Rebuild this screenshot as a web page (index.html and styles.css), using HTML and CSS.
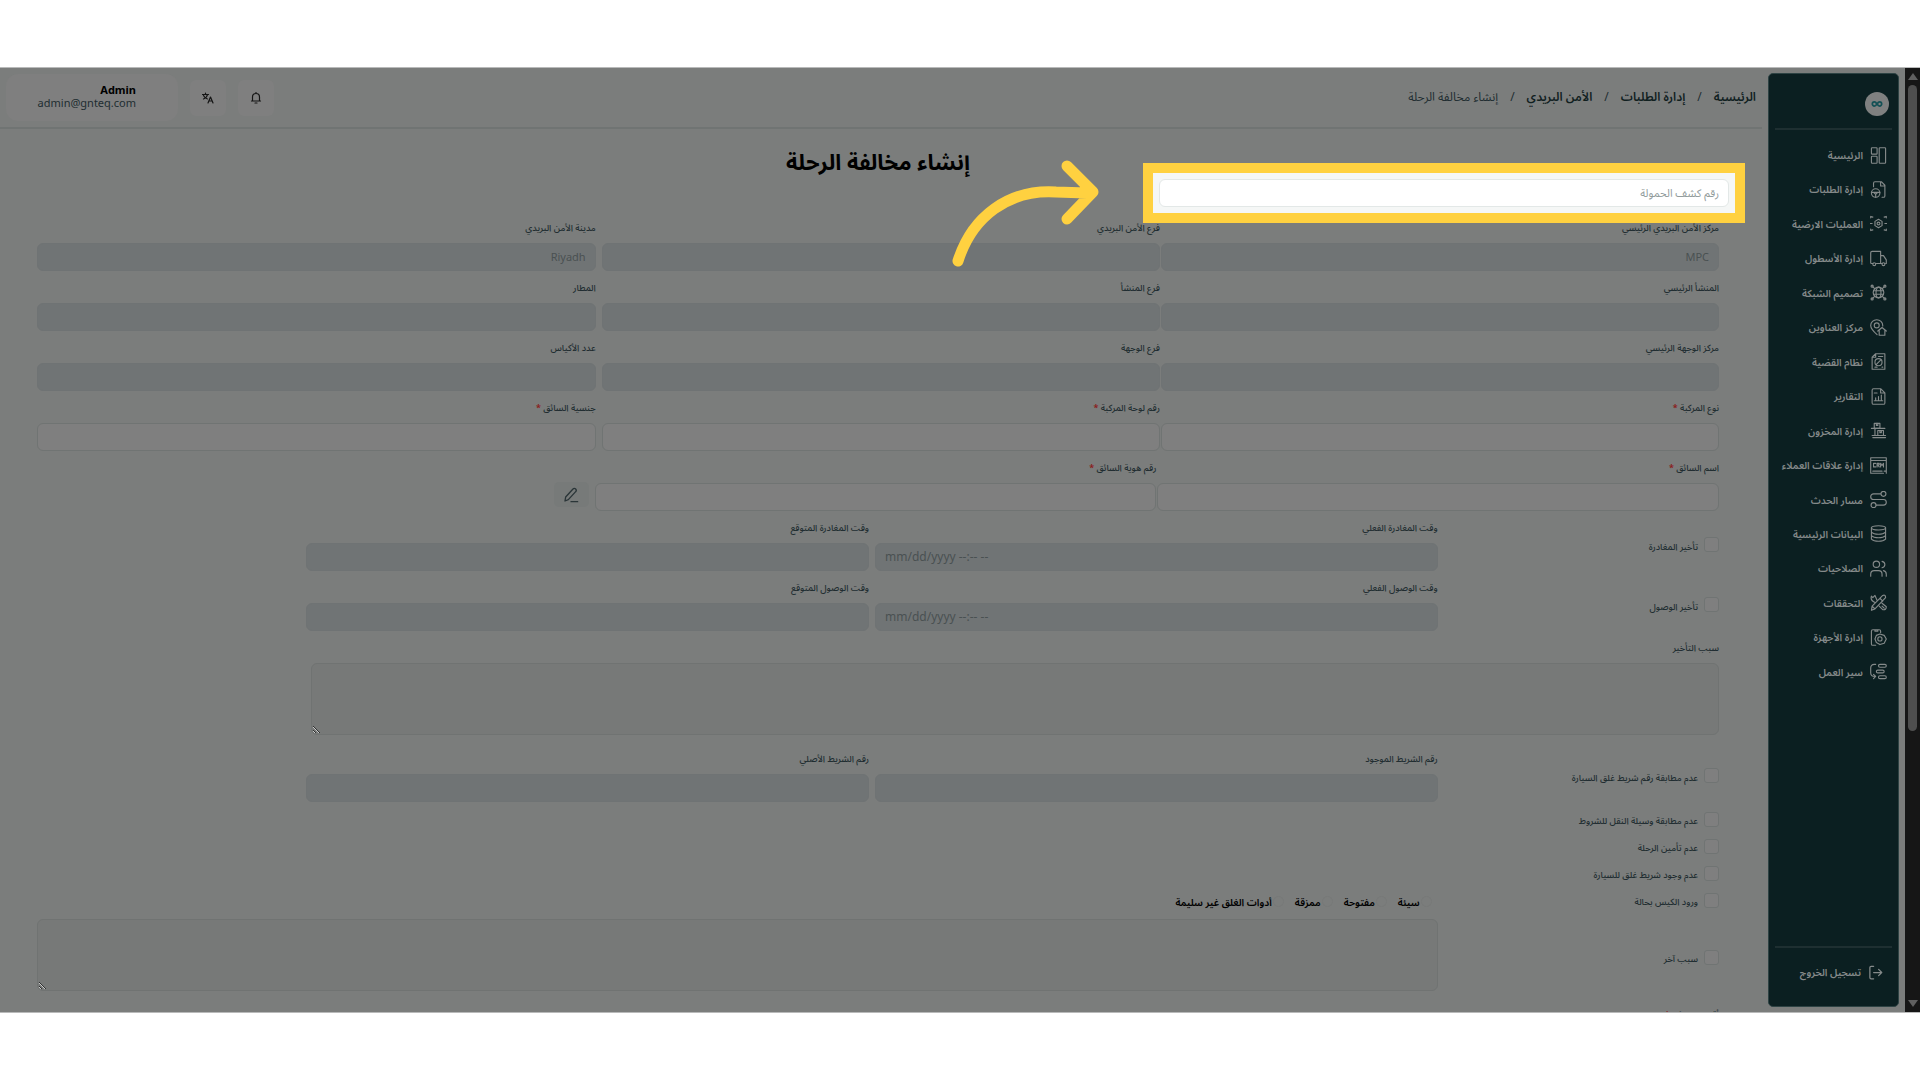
FILE: index.html
```html
<!DOCTYPE html>
<html lang="ar" dir="rtl">
  <head>
    <meta charset="UTF-8" />
    <meta name="viewport" content="width=device-width, initial-scale=1.0" />
    <title>إنشاء مخالفة الرحلة</title>
    <link rel="stylesheet" href="styles.css">
  </head>
  <body>
    <div class="frame">
      <div class="scrollbar">
        <span class="arrow_up"></span>
        <div class="track"><div class="thumb"></div></div>
        <span class="arrow_down"></span>
      </div>

      <aside class="sidebar">
        <div class="logo">
          <svg viewBox="0 0 24 24"><path d="M12 12c-2-3-3.200-3.500-4.500-3.500a3.500 3.500 0 0 0 0 7c1.300 0 2.500-.5 4.500-3.500s3.200-3.500 4.500-3.500a3.500 3.500 0 0 1 0 7c-1.300 0-2.500-.5-4.500-3.500z"/></svg>
        </div>
        <nav class="menu">
          <a href="#"><svg viewBox="0 0 24 24"><rect x="2" y="1" width="8" height="9" rx="1"/><rect x="2" y="13" width="8" height="10" rx="1"/><rect x="13" y="1" width="9" height="22" rx="1"/></svg>الرئيسية</a>
          <a href="#"><svg viewBox="0 0 24 24"><path d="M5 8V3q0-2 2-2h9l5 5v15q0 2-2 2h-2M15 1v6h6"/><circle cx="8" cy="17" r="6"/><path d="M2 16h12M8 18v5M5 16l3 3 3-3"/></svg>إدارة الطلبات</a>
          <a href="#"><svg viewBox="0 0 24 24"><path d="M1 4V2l3 1M23 4V2l-3 1M1 20v2l3-1M23 20v2l-3-1M0 12h3M21 12h3"/><path d="M12 6l5 3v6l-5 3-5-3V9z"/><circle cx="12" cy="12" r="2"/></svg>العمليات الارضية</a>
          <a href="#"><svg viewBox="0 0 24 24"><path d="M4 19H2q-1 0-1-1V4q0-2 2-2h12v17H9M15 8h4l4 6v5h-1M15 19h2"/><circle cx="6" cy="20" r="2"/><circle cx="19" cy="20" r="2"/></svg>إدارة الأسطول</a>
          <a href="#"><svg viewBox="0 0 24 24"><circle cx="12" cy="12" r="7.500"/><ellipse cx="12" cy="12" rx="3.500" ry="7.500"/><path d="M5 9.500h14M5 14.500h14M4 4l3 3M20 4l-3 3M4 20l3-3M20 20l-3-3"/><circle cx="3" cy="3" r="1.500"/><circle cx="21" cy="3" r="1.500"/><circle cx="3" cy="21" r="1.500"/><circle cx="21" cy="21" r="1.500"/></svg>تصميم الشبكة</a>
          <a href="#"><svg viewBox="0 0 24 24"><path d="M10 22Q1 14 1 9a8.500 8 0 0 1 17 0v1"/><circle cx="9.500" cy="9" r="3.500"/><path d="M11 17l6-5 6 5M13 16v7h8v-7"/></svg>مركز العناوين</a>
          <a href="#"><svg viewBox="0 0 24 24"><path d="M8 1h13v22H3V6zM8 1v5H3M12 5h6M7 20h3M17 20h1"/><circle cx="12" cy="13" r="5"/><path d="M9 16l6-6"/></svg>نظام القضية</a>
          <a href="#"><svg viewBox="0 0 24 24"><path d="M15 1H5Q3 1 3 3v18q0 2 2 2h14q2 0 2-2V7zM15 1v6h6M6 7h4M6 18h12M8 18v-4M12 18v-6M16 18v-8"/></svg>التقارير</a>
          <a href="#"><svg viewBox="0 0 24 24"><rect x="6" y="2" width="8" height="7"/><rect x="11" y="12" width="8" height="7"/><path d="M9 2v3h2V2M14 12v3h2v-3M2 9h19M4 22h18M3 19h19M7 9v10"/></svg>إدارة المخزون</a>
          <a href="#"><svg viewBox="0 0 24 24"><path d="M23 17V1H1v22h18M1 5h22M4 20h13M20 20h3M23 17v6"/><path d="M8 9H5v5h3M10 14V9h3v2h-3M13 14l-2-3M15 14V9l2 3 2-3v5"/></svg>إدارة علاقات العملاء</a>
          <a href="#"><svg viewBox="0 0 24 24"><circle cx="19" cy="4" r="3.500"/><circle cx="5" cy="20" r="3.500"/><path d="M15 4H5a4 4 0 0 0 0 8h14a4 4 0 0 1 0 8H9"/></svg>مسار الحدث</a>
          <a href="#"><svg viewBox="0 0 24 24"><ellipse cx="12" cy="4" rx="10" ry="3"/><path d="M2 4v16q3 3 10 3t10-3V4M2 10q3 3 10 3t10-3M2 15q3 3 10 3t10-3"/></svg>البيانات الرئيسية</a>
          <a href="#"><svg viewBox="0 0 24 24"><circle cx="9" cy="6" r="4.500"/><path d="M1 23v-3q0-5 5-5h6q5 0 5 5v3M17 2q4 1 4 4.500T17 11M19 15q4 1 4 5v3"/></svg>الصلاحيات</a>
          <a href="#"><svg viewBox="0 0 24 24"><path d="M2 23l1-6L18 2q2-1 3 0t1 3L7 21zM14 6l4 4M10 9L7 2 4 5 2 3q-2 6 5 9M13 17l5 5q5 1 5-4l-6-5M17 17l3 3M3 17l4 4"/></svg>التحققات</a>
          <a href="#"><svg viewBox="0 0 24 24"><path d="M8 23H4q-2 0-2-2V3q0-2 2-2h9q2 0 2 2v2M7 1v2h4V1"/><path d="M14 7l6 2 3 5-3 6-6 2-5-3-2-5 2-5z"/><circle cx="14" cy="14" r="3"/></svg>إدارة الأجهزة</a>
          <a href="#"><svg viewBox="0 0 24 24"><rect x="12" y="2" width="11" height="4" rx="2"/><rect x="9" y="10" width="11" height="4" rx="2"/><rect x="12" y="18" width="11" height="4" rx="2"/><path d="M8 2H6Q1 2 1 7v7q0 5 6 5M5 16l3 3-3 3"/></svg>سير العمل</a>
        </nav>
        <a class="logout" href="#"><svg viewBox="0 0 24 24"><path d="M9 2H5Q3 2 3 4v16q0 2 2 2h4M9 12h13M17 7l5 5-5 5"/></svg>تسجيل الخروج</a>
      </aside>

      <main class="content">
        <header>
          <nav class="breadcrumb">
            <a href="#">الرئيسية</a><span>/</span>
            <a href="#">إدارة الطلبات</a><span>/</span>
            <a href="#">الأمن البريدي</a><span>/</span>
            <span>إنشاء مخالفة الرحلة</span>
          </nav>
          <div class="tools">
            <button class="tool" aria-label="الإشعارات"><svg viewBox="0 0 24 24"><path d="M5 18V10a7 7 0 0 1 14 0v8M3 18h18M12 1v2M10 22h4"/></svg></button>
            <button class="tool" aria-label="اللغة"><svg viewBox="0 0 24 24"><path d="M1 5h12M7 2v3M3 14q7-3 8-9M3 7q3 6 8 7M12 22l5-12 5 12M14 18h6"/></svg></button>
            <div class="user">
              <strong>Admin</strong>
              <span>admin@gnteq.com</span>
            </div>
          </div>
        </header>

        <form class="trip">
          <h1>إنشاء مخالفة الرحلة</h1>
          <div class="spotlight">
            <input type="text" placeholder="رقم كشف الحمولة" aria-label="رقم كشف الحمولة" />
            <svg class="pointer" viewBox="0 0 148 110"><path d="M6 102C20 58 56 30 104 33L135 34M115 7L141 33L115 60"/></svg>
          </div>

          <div class="row">
            <div class="pair">
              <div class="field"><label for="hub">مركز الأمن البريدي الرئيسي</label><input id="hub" type="text" value="MPC" disabled /></div>
              <div class="field"><label for="branch">فرع الأمن البريدي</label><input id="branch" type="text" disabled /></div>
            </div>
            <div class="field"><label for="city">مدينة الأمن البريدي</label><input id="city" type="text" value="Riyadh" disabled /></div>
          </div>
          <div class="row">
            <div class="pair">
              <div class="field"><label for="origin">المنشأ الرئيسي</label><input id="origin" type="text" disabled /></div>
              <div class="field"><label for="origin_branch">فرع المنشأ</label><input id="origin_branch" type="text" disabled /></div>
            </div>
            <div class="field"><label for="airport">المطار</label><input id="airport" type="text" disabled /></div>
          </div>
          <div class="row">
            <div class="pair">
              <div class="field"><label for="dest">مركز الوجهة الرئيسي</label><input id="dest" type="text" disabled /></div>
              <div class="field"><label for="dest_branch">فرع الوجهة</label><input id="dest_branch" type="text" disabled /></div>
            </div>
            <div class="field"><label for="bags">عدد الأكياس</label><input id="bags" type="text" disabled /></div>
          </div>
          <div class="row">
            <div class="pair">
              <div class="field"><label for="vehicle">نوع المركبة <b>*</b></label><input id="vehicle" type="text" /></div>
              <div class="field"><label for="plate">رقم لوحة المركبة <b>*</b></label><input id="plate" type="text" /></div>
            </div>
            <div class="field"><label for="nation">جنسية السائق <b>*</b></label><input id="nation" type="text" /></div>
          </div>
          <div class="row driver">
            <div class="pair">
              <div class="field"><label for="driver">اسم السائق <b>*</b></label><input id="driver" type="text" /></div>
              <div class="field"><label for="driver_id">رقم هوية السائق <b>*</b></label><input id="driver_id" type="text" /></div>
            </div>
            <button class="edit" type="button" aria-label="تعديل"><svg viewBox="0 0 24 24"><path d="M3 21l1-6L15 3q2-2 4 0t0 4L8 19zM12 22h10"/></svg></button>
          </div>

          <div class="row times">
            <div class="check"><input id="late_dep" type="checkbox" /><label for="late_dep">تأخير المغادرة</label></div>
            <div class="field"><label for="dep_real">وقت المغادرة الفعلي</label><input id="dep_real" type="text" dir="ltr" placeholder="mm/dd/yyyy --:-- --" disabled /></div>
            <div class="field"><label for="dep_plan">وقت المغادرة المتوقع</label><input id="dep_plan" type="text" disabled /></div>
          </div>
          <div class="row times">
            <div class="check"><input id="late_arr" type="checkbox" /><label for="late_arr">تأخير الوصول</label></div>
            <div class="field"><label for="arr_real">وقت الوصول الفعلي</label><input id="arr_real" type="text" dir="ltr" placeholder="mm/dd/yyyy --:-- --" disabled /></div>
            <div class="field"><label for="arr_plan">وقت الوصول المتوقع</label><input id="arr_plan" type="text" disabled /></div>
          </div>
          <div class="field reason"><label for="reason">سبب التأخير</label><textarea id="reason" disabled></textarea></div>

          <div class="row times spaced">
            <div class="check"><input id="tape" type="checkbox" /><label for="tape">عدم مطابقة رقم شريط غلق السيارة</label></div>
            <div class="field"><label for="tape_found">رقم الشريط الموجود</label><input id="tape_found" type="text" disabled /></div>
            <div class="field"><label for="tape_orig">رقم الشريط الأصلي</label><input id="tape_orig" type="text" disabled /></div>
          </div>
          <div class="row line"><div class="check"><input id="transport" type="checkbox" /><label for="transport">عدم مطابقة وسيلة النقل للشروط</label></div></div>
          <div class="row line"><div class="check"><input id="unsafe" type="checkbox" /><label for="unsafe">عدم تأمين الرحلة</label></div></div>
          <div class="row line"><div class="check"><input id="no_tape" type="checkbox" /><label for="no_tape">عدم وجود شريط غلق للسيارة</label></div></div>
          <div class="row line">
            <div class="check"><input id="bag_state" type="checkbox" /><label for="bag_state">ورود الكيس بحالة</label></div>
            <div class="options">
              <label><input type="radio" name="bag" disabled />سيئة</label>
              <label><input type="radio" name="bag" disabled />مفتوحة</label>
              <label><input type="radio" name="bag" disabled />ممزقة</label>
              <label><input type="radio" name="bag" disabled />أدوات الغلق غير سليمة</label>
            </div>
          </div>
          <div class="row other">
            <div class="check"><input id="other" type="checkbox" /><label for="other">سبب آخر</label></div>
            <textarea aria-label="سبب آخر" disabled></textarea>
          </div>
          <div class="field spaced"><label for="statement">أقوال السائق <b>*</b></label><textarea id="statement"></textarea></div>
        </form>
      </main>
    </div>
  </body>
</html>
```
FILE: styles.css
```css
* {
  box-sizing: border-box;
}

body {
  margin: 0;
  height: 100vh;
  padding: 67px 0;
  background-color: #fff;
  font-family: "Noto Sans", "Noto Sans Arabic", "DejaVu Sans", sans-serif;
  font-size: 11px;
  color: #212d31;
}

a {
  color: inherit;
  text-decoration: none;
}

button,
input,
textarea {
  font-family: inherit;
  font-size: inherit;
}

svg {
  fill: none;
  stroke: currentColor;
  stroke-width: 2;
  stroke-linecap: round;
  stroke-linejoin: round;
}

.frame {
  display: flex;
  height: 100%;
  overflow: hidden;
  background-color: #7b7d7c;
  border-top: 1px solid #b9baba;
  border-bottom: 1px solid #b9baba;
}

/* scrollbar */
.scrollbar {
  width: 15px;
  padding: 5px 0;
  display: flex;
  flex-direction: column;
  align-items: center;
  background-color: #161616;
}

.arrow_up,
.arrow_down {
  border: 5px solid transparent;
}

.arrow_up {
  border-top: 0;
  border-bottom: 7px solid #606060;
}

.arrow_down {
  border-bottom: 0;
  border-top: 7px solid #606060;
}

.track {
  flex: 1;
  width: 9px;
  padding: 5px 0;
}

.thumb {
  height: 71%;
  border-radius: 5px;
  background-color: #4e4e4e;
}

/* sidebar */
.sidebar {
  flex: none;
  width: 131px;
  margin: 5px 6px;
  padding: 0 6px;
  display: flex;
  flex-direction: column;
  border: 1px solid #2e4344;
  border-radius: 5px;
  background-color: #0b1f21;
  color: #858a8a;
  font-size: 10px;
  font-weight: 600;
}

.logo {
  height: 56px;
  padding: 18px 3px 0;
  border-bottom: 2px solid #1e2f31;
}

.logo svg {
  display: block;
  width: 24px;
  height: 24px;
  padding: 5px;
  border-radius: 50%;
  background-color: #7f8080;
  color: #145055;
  stroke-width: 3;
}

.menu {
  height: 541px;
  margin-top: 13px;
  display: flex;
  flex-direction: column;
  justify-content: space-between;
}

.menu a,
.logout {
  display: flex;
  align-items: center;
  gap: 7px;
  padding-right: 5px;
  line-height: 24px;
  white-space: nowrap;
}

.menu svg,
.logout svg {
  flex: none;
  width: 17px;
  height: 17px;
  stroke-width: 1.6;
}

.logout {
  margin-top: auto;
  padding: 12px 9px 22px;
  border-top: 2px solid #1e2f31;
}

.logout svg {
  width: 15px;
  height: 15px;
  stroke-width: 2;
}

/* top bar */
.content {
  flex: 1;
  min-width: 0;
  overflow: hidden;
}

header {
  height: 61px;
  padding: 0 6px;
  display: flex;
  align-items: center;
  justify-content: space-between;
  border-bottom: 2px solid #707473;
}

.breadcrumb {
  display: flex;
  align-items: baseline;
  gap: 12px;
  font-size: 12px;
}

.breadcrumb a {
  font-weight: 600;
  color: #10201f;
}

.tools {
  display: flex;
  align-items: center;
  gap: 12px;
}

.tool {
  width: 36px;
  height: 36px;
  padding: 0;
  border: 0;
  border-radius: 6px;
  background-color: #7f7f7f;
  color: #151515;
}

.tool svg {
  display: block;
  width: 12px;
  height: 12px;
  margin: auto;
  stroke-width: 2.4;
}

.user {
  width: 172px;
  height: 47px;
  padding: 9px 42px;
  display: flex;
  flex-direction: column;
  border-radius: 12px;
  background-color: #7f7f7f;
  line-height: 13px;
}

.user strong {
  color: #000;
}

/* form */
.trip {
  padding: 21px 43px 0 37px;
  display: flex;
  flex-direction: column;
  gap: 9px;
}

.trip h1 {
  margin: 0 0 -8px;
  font-size: 22px;
  line-height: 22px;
  text-align: center;
  color: #000;
}

.spotlight {
  position: relative;
  z-index: 1;
  width: calc(100% / 3 + 21px);
  margin: 0 -16px -2px 0;
  padding: 6px;
  background-color: #f5f7f6;
  box-shadow: 0 0 0 10px #ffd140;
}

.trip input[type="text"],
textarea {
  display: block;
  width: 100%;
  height: 28px;
  padding: 0 9px 2px;
  border: 1px solid #707473;
  border-radius: 6px;
  background-color: #7f7f7f;
  color: #4a5152;
}

.trip input[type="text"]:disabled {
  border-color: #6f7374;
  background-color: #707475;
}

.trip .spotlight input[type="text"] {
  border: 1px solid #e3e8e7;
  background-color: #fff;
}

.spotlight input::placeholder {
  color: #929c9c;
}

.field input::placeholder {
  font-size: 12px;
  color: #4a5152;
}

.pointer {
  position: absolute;
  top: -14px;
  right: calc(100% + 53px);
  width: 148px;
  height: 110px;
  stroke: #ffd140;
  stroke-width: 11;
}

.row {
  display: flex;
  gap: 6px;
}

.row .field {
  flex: 1;
}

.row .pair {
  flex: 2;
  display: flex;
  gap: 1px;
}

.field label {
  display: block;
  margin-bottom: 7px;
  font-size: 9px;
  line-height: 16px;
  font-weight: 500;
}

.field b {
  color: #8a1f1f;
}

.row.driver .pair {
  flex: none;
  width: calc(100% * 2 / 3 + 3px);
}

.edit {
  align-self: flex-end;
  width: 35px;
  height: 25px;
  margin-bottom: 4px;
  padding: 0;
  border: 0;
  border-radius: 5px;
  background-color: #777a79;
  color: #2a3538;
}

.edit svg {
  display: block;
  width: 16px;
  height: 16px;
  margin: auto;
}

.row.times .field {
  flex: none;
  width: calc(100% / 3 + 2px);
}

.check {
  flex: none;
  width: calc(100% / 6 + 1px);
  display: flex;
  gap: 6px;
  font-size: 9px;
  font-weight: 500;
  line-height: 16px;
  white-space: nowrap;
}

.times .check {
  margin-left: -6px;
  padding-top: 17px;
}

.check label {
  padding-top: 2px;
}

.line .check label {
  padding-top: 1px;
}

.check input,
.options input {
  appearance: none;
  flex: none;
  width: 15px;
  height: 15px;
  margin: 0;
  border: 1px solid #707473;
  border-radius: 3px;
  background-color: #7f7f7f;
}

.reason textarea {
  width: calc(100% * 5 / 6 + 6px);
}

textarea,
.trip textarea {
  height: 72px;
}

textarea:disabled {
  border-color: #707372;
  background-color: #777978;
}

.spaced {
  margin-top: 7px;
}

.line {
  height: 18px;
  padding-top: 1px;
}

.options {
  display: flex;
  gap: 11px;
  font-size: 10px;
  color: #000;
  font-weight: 600;
  line-height: 16px;
}

.options label {
  display: flex;
  align-items: center;
  gap: 1px;
}

.options input {
  width: 11px;
  height: 11px;
  border-color: #777978;
  border-radius: 50%;
  background-color: transparent;
}

.other {
  gap: 0;
}

.other .check {
  padding-top: 31px;
}

.other .check label {
  padding-top: 1px;
}
```
